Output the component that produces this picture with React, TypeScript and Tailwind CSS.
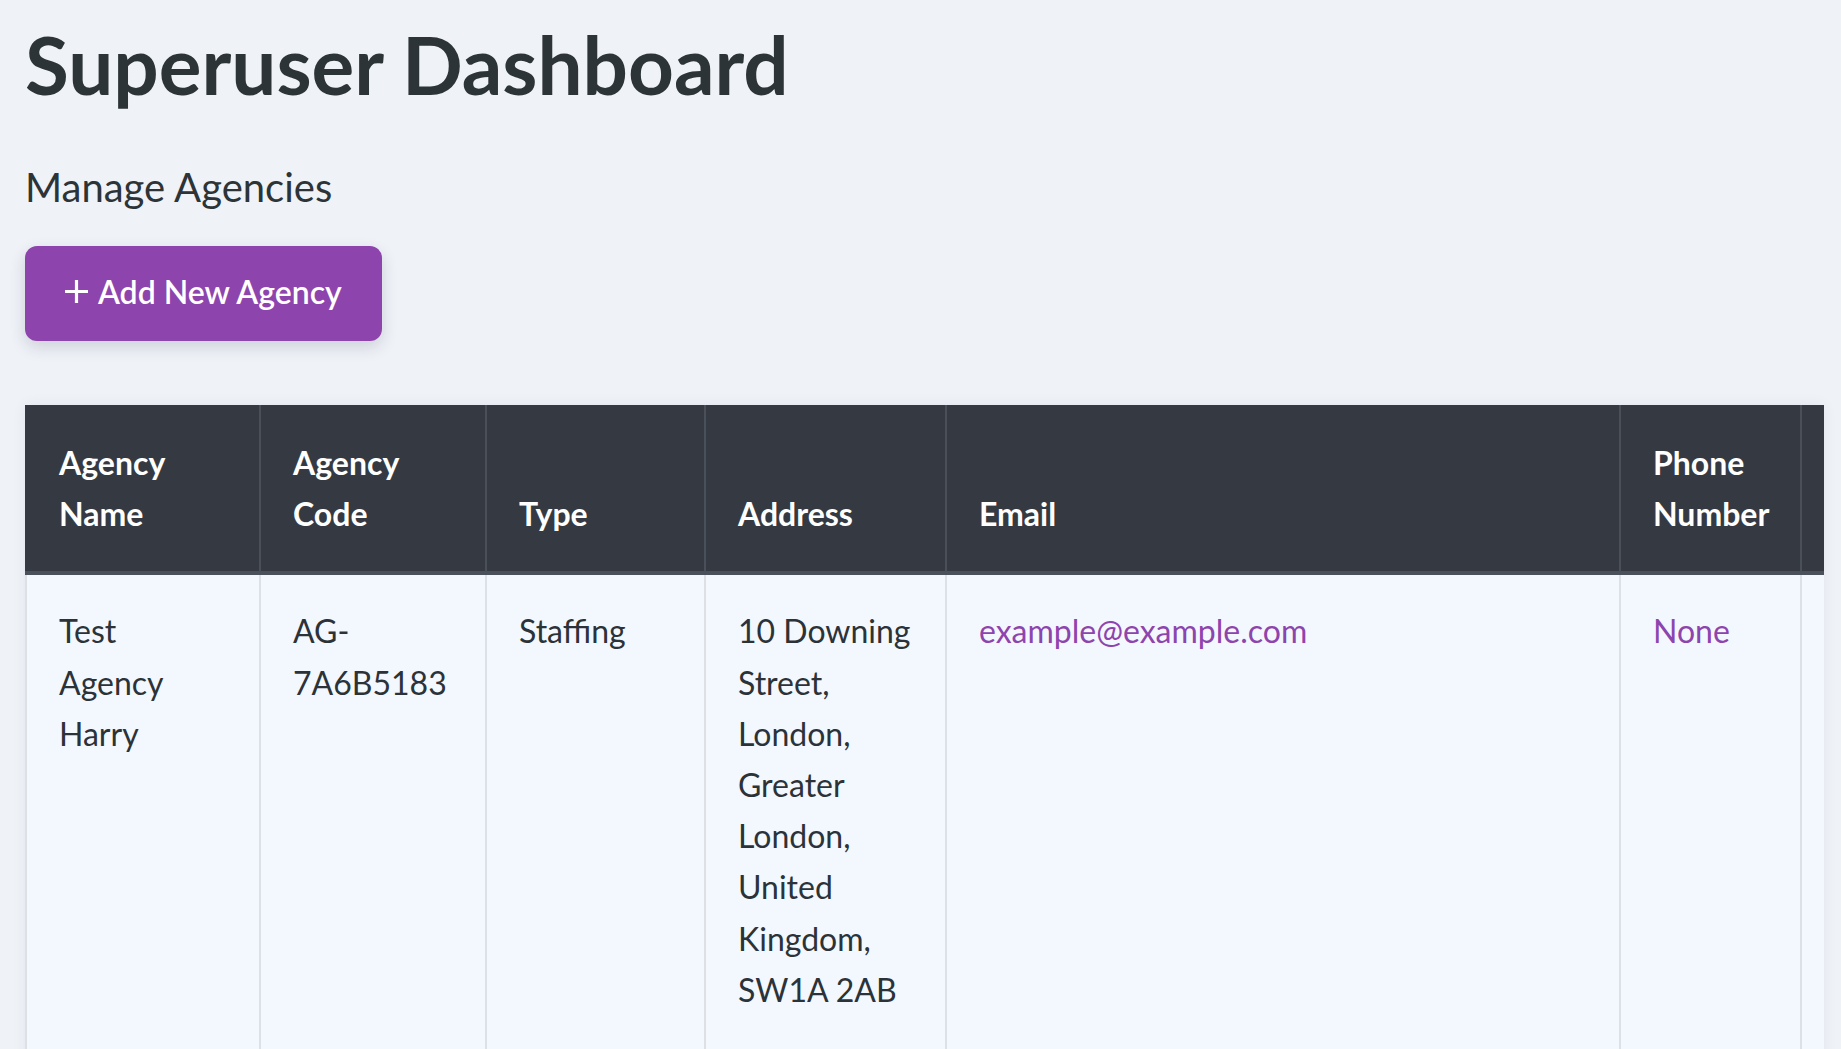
import React from "react";

interface Agency {
  name: string;
  code: string;
  type: string;
  address: string;
  email: string;
  phone: string | null;
}

const agencies: Agency[] = [
  {
    name: "Test Agency Harry",
    code: "AG-7A6B5183",
    type: "Staffing",
    address: "10 Downing Street, London, Greater London, United Kingdom, SW1A 2AB",
    email: "example@example.com",
    phone: null,
  },
];

function PlusIcon() {
  return (
    <svg width="25" height="25" viewBox="0 0 25 25" fill="none" stroke="currentColor" strokeWidth={3.2} strokeLinecap="butt">
      <path d="M12.5 1v23M1 12.5h23" />
    </svg>
  );
}

export default function App() {
  const th = "px-[32px] py-[32px] align-bottom text-left font-bold text-white border-l-2 border-[#4a5059]";
  const td = "px-[32px] pt-[30px] pb-[32px] align-top text-left border-l-2 border-[#dde1e6]";

  return (
    <div className="min-h-screen bg-[#eff2f7] pl-[25px] pr-[17px] pb-10 font-['Lato','Open_Sans',sans-serif] text-[#2c3437]">
      <h1 className="pt-[16px] text-[80px] font-bold leading-[1.2]">Superuser Dashboard</h1>
      <h2 className="mt-[51px] text-[40px] leading-[1.2]">Manage Agencies</h2>

      <button className="mt-[35px] inline-flex h-[95px] items-center gap-[9px] rounded-[12px] bg-[#8e44ad] pb-[4px] pl-[39px] pr-[40px] text-[32px] font-semibold text-white shadow-[0_6px_16px_rgba(30,40,60,0.16)]">
        <PlusIcon />
        <span>Add New Agency</span>
      </button>

      <div className="mt-[64px] overflow-hidden shadow-[0_0_14px_rgba(30,40,60,0.06)]">
        <table className="w-[1990px] table-fixed border-collapse text-[32px] leading-[1.6]">
          <colgroup>
            <col className="w-[234px]" />
            <col className="w-[226px]" />
            <col className="w-[219px]" />
            <col className="w-[241px]" />
            <col className="w-[674px]" />
            <col className="w-[181px]" />
            <col className="w-[215px]" />
          </colgroup>
          <thead className="bg-[#353a42]">
            <tr className="border-b-4 border-[#4b515a]">
              <th className={`${th} border-l-[#353a42] pr-[40px]`}>Agency Name</th>
              <th className={th}>Agency Code</th>
              <th className={th}>Type</th>
              <th className={th}>Address</th>
              <th className={th}>Email</th>
              <th className={th}>Phone Number</th>
              <th className={th}>Actions</th>
            </tr>
          </thead>
          <tbody className="bg-[#f3f8fe] text-[#2c3338]">
            {agencies.map((a) => (
              <tr key={a.code} className="h-[560px]">
                <td className={`${td} pr-[40px]`}>{a.name}</td>
                <td className={`${td} break-words`}>{a.code}</td>
                <td className={td}>{a.type}</td>
                <td className={td}>{a.address}</td>
                <td className={`${td} text-[#8e44ad]`}>{a.email}</td>
                <td className={`${td} text-[#8e44ad]`}>{a.phone ?? "None"}</td>
                <td className={td}></td>
              </tr>
            ))}
          </tbody>
        </table>
      </div>
    </div>
  );
}
